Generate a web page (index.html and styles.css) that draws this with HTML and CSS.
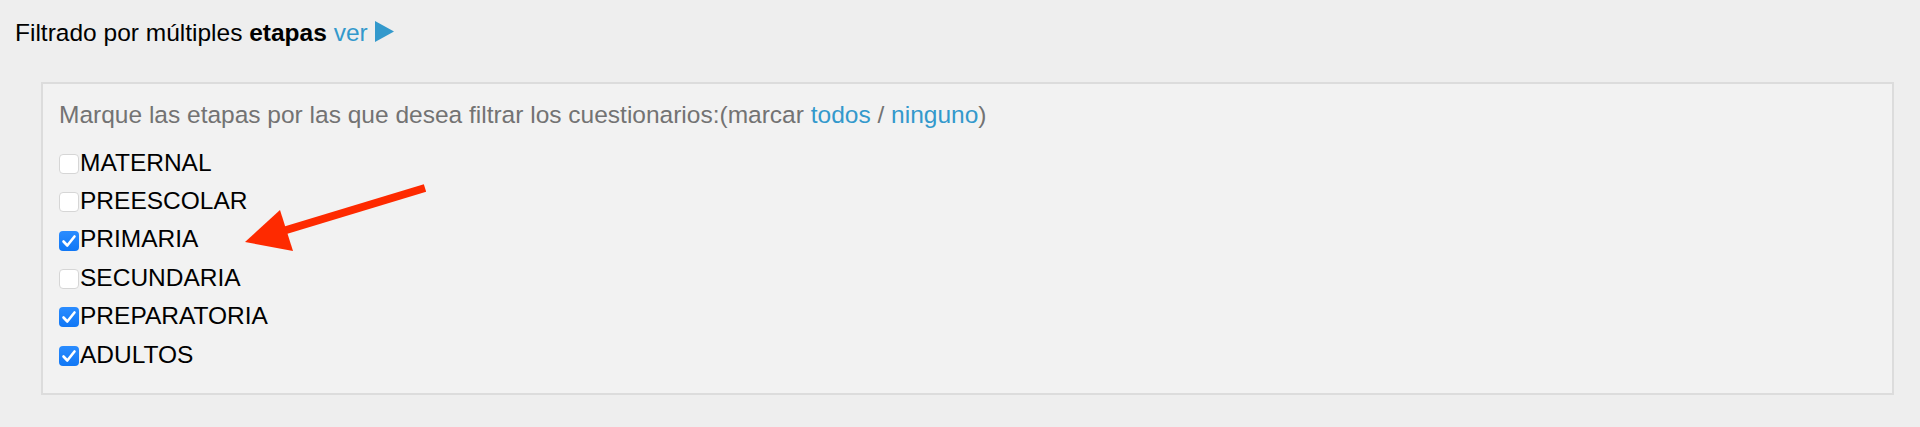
FILE: index.html
```html
<!DOCTYPE html>
<html lang="es">
<head>
<meta charset="utf-8">
<title>Filtrado por etapas</title>
<link rel="stylesheet" href="styles.css">
</head>
<body>
<div class="page">
  <p class="heading">Filtrado por múltiples <b>etapas</b> <a class="link" href="#">ver</a> <svg class="tri" width="19" height="21" viewBox="0 0 19 21"><polygon points="0,0 19,10.5 0,21" fill="#3399cc"/></svg></p>
  <div class="panel">
    <p class="intro">Marque las etapas por las que desea filtrar los cuestionarios:(marcar <a class="link" href="#">todos</a> / <a class="link" href="#">ninguno</a>)</p>
    <ul class="list">
      <li class="row"><span class="cb"></span><span class="label">MATERNAL</span></li>
      <li class="row"><span class="cb"></span><span class="label">PREESCOLAR</span></li>
      <li class="row"><span class="cb on"><svg viewBox="0 0 20 20" width="20" height="20"><path d="M4.5 10.5 L8.3 14.5 L15.5 5.5" fill="none" stroke="#fff" stroke-width="2.6" stroke-linecap="round" stroke-linejoin="round"/></svg></span><span class="label">PRIMARIA</span></li>
      <li class="row"><span class="cb"></span><span class="label">SECUNDARIA</span></li>
      <li class="row"><span class="cb on"><svg viewBox="0 0 20 20" width="20" height="20"><path d="M4.5 10.5 L8.3 14.5 L15.5 5.5" fill="none" stroke="#fff" stroke-width="2.6" stroke-linecap="round" stroke-linejoin="round"/></svg></span><span class="label">PREPARATORIA</span></li>
      <li class="row"><span class="cb on"><svg viewBox="0 0 20 20" width="20" height="20"><path d="M4.5 10.5 L8.3 14.5 L15.5 5.5" fill="none" stroke="#fff" stroke-width="2.6" stroke-linecap="round" stroke-linejoin="round"/></svg></span><span class="label">ADULTOS</span></li>
    </ul>
  </div>
  <svg class="arrow" width="1920" height="427" viewBox="0 0 1920 427">
    <line x1="425" y1="188" x2="283" y2="231" stroke="#fe2a00" stroke-width="8"/>
    <polygon points="245,242 280,210 293,251" fill="#fe2a00"/>
  </svg>
</div>
</body>
</html>
```
FILE: styles.css
```css
html, body {
  margin: 0;
  padding: 0;
  background: #eeeeee;
}
body {
  font-family: "Liberation Sans", Arial, Helvetica, sans-serif;
  font-size: 24.5px;
  color: #000;
}
.page {
  position: relative;
  width: 1920px;
  height: 427px;
  padding-top: 19px;
  box-sizing: border-box;
}
.heading {
  margin: 0 0 0 15px;
  line-height: 28px;
  height: 28px;
}
.heading b { font-weight: bold; }
.tri {
  vertical-align: -1px;
}
.link {
  color: #3399cc;
  text-decoration: none;
}
.panel {
  margin: 35px 26px 0 41px;
  border: 2px solid #dcdcdc;
  background: #f2f2f2;
  padding: 17px 16px 19px 16px;
}
.intro {
  margin: 0;
  line-height: 28px;
  color: #737373;
}
.list {
  list-style: none;
  margin: 14.6px 0 0 0;
  padding: 0;
}
.row {
  display: flex;
  align-items: center;
  height: 38.4px;
  line-height: 38.4px;
}
.cb {
  width: 20px;
  height: 20px;
  box-sizing: border-box;
  border: 1px solid #d6d6d6;
  border-radius: 4px;
  background: #fff;
  margin: 2px 0 0 0;
  flex: none;
  display: flex;
}
.cb.on {
  border: none;
  background: linear-gradient(#2a8cff, #1077f5);
}
.label {
  margin-left: 1px;
  color: #000;
}
.arrow {
  position: absolute;
  left: 0;
  top: 0;
  pointer-events: none;
}
```
